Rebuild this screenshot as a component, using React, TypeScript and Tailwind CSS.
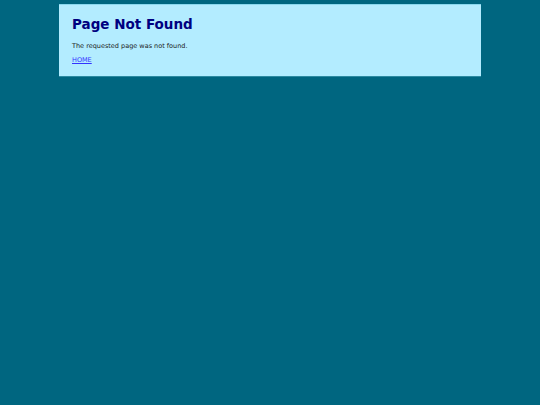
import React from 'react';

export default function App() {
  return (
    <div className="min-h-[405px] w-full bg-[#006680] pt-1" style={{ fontFamily: '"DejaVu Sans", Verdana, sans-serif' }}>
      <div className="mx-auto w-[422px] h-[73px] bg-[#b3ecff] border-t border-[#8ad8ee] border-b border-b-[#2d8aa2] px-[13px] pt-[10px]">
        <h1 className="text-[13.5px] font-bold text-[#000080] leading-[18px]">Page Not Found</h1>
        <p className="mt-[8px] text-[6.5px] text-[#1a1a1a] leading-[10px]">The requested page was not found.</p>
        <a href="#" className="mt-[4px] block text-[6.5px] leading-[10px] text-[#3333ff] underline">HOME</a>
      </div>
    </div>
  );
}
